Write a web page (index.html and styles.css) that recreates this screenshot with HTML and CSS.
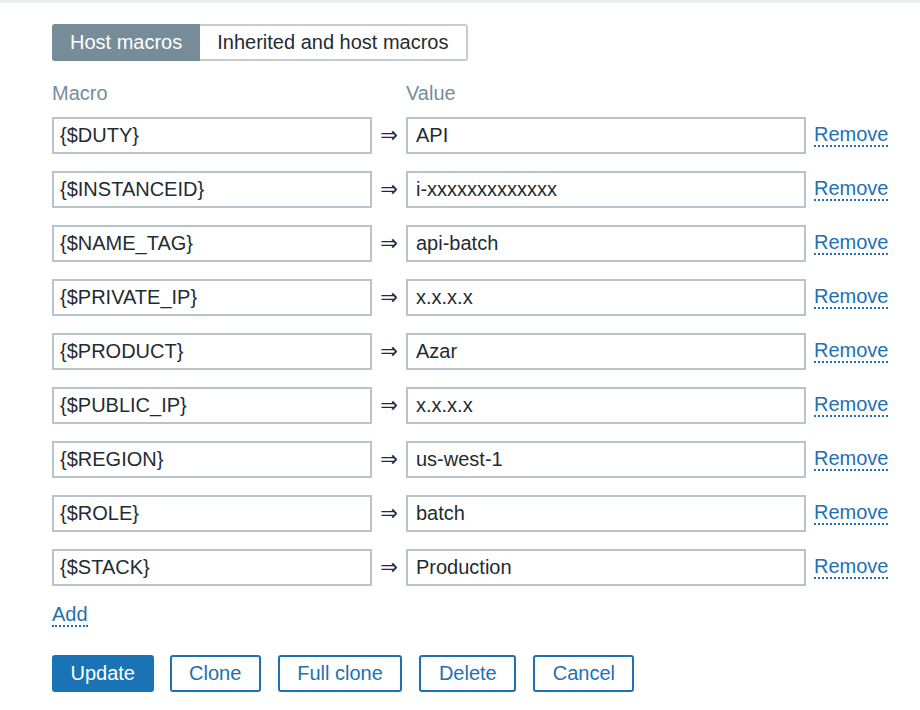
FILE: index.html
```html
<!DOCTYPE html>
<html>
<head>
<meta charset="utf-8">
<link rel="stylesheet" href="styles.css">
</head>
<body>
<div class="page">
  <div class="tabs">
    <div class="tab tab-active">Host macros</div>
    <div class="tab">Inherited and host macros</div>
  </div>
  <div class="head">
    <div class="head-macro">Macro</div>
    <div class="head-value">Value</div>
  </div>
  <div class="rows">
    <div class="row"><div class="field macro">{$DUTY}</div><div class="arrow">⇒</div><div class="field value">API</div><a class="link remove">Remove</a></div>
    <div class="row"><div class="field macro">{$INSTANCEID}</div><div class="arrow">⇒</div><div class="field value">i-xxxxxxxxxxxxx</div><a class="link remove">Remove</a></div>
    <div class="row"><div class="field macro">{$NAME_TAG}</div><div class="arrow">⇒</div><div class="field value">api-batch</div><a class="link remove">Remove</a></div>
    <div class="row"><div class="field macro">{$PRIVATE_IP}</div><div class="arrow">⇒</div><div class="field value">x.x.x.x</div><a class="link remove">Remove</a></div>
    <div class="row"><div class="field macro">{$PRODUCT}</div><div class="arrow">⇒</div><div class="field value">Azar</div><a class="link remove">Remove</a></div>
    <div class="row"><div class="field macro">{$PUBLIC_IP}</div><div class="arrow">⇒</div><div class="field value">x.x.x.x</div><a class="link remove">Remove</a></div>
    <div class="row"><div class="field macro">{$REGION}</div><div class="arrow">⇒</div><div class="field value">us-west-1</div><a class="link remove">Remove</a></div>
    <div class="row"><div class="field macro">{$ROLE}</div><div class="arrow">⇒</div><div class="field value">batch</div><a class="link remove">Remove</a></div>
    <div class="row"><div class="field macro">{$STACK}</div><div class="arrow">⇒</div><div class="field value">Production</div><a class="link remove">Remove</a></div>
  </div>
  <div class="add-line"><a class="link">Add</a></div>
  <div class="buttons">
    <div class="btn btn-primary">Update</div>
    <div class="btn">Clone</div>
    <div class="btn">Full clone</div>
    <div class="btn">Delete</div>
    <div class="btn">Cancel</div>
  </div>
</div>
</body>
</html>
```

FILE: styles.css
```css
html, body {
  margin: 0;
  padding: 0;
  background: #ffffff;
}
body {
  font-family: "Liberation Sans", Arial, Helvetica, sans-serif;
  font-size: 20px;
  color: #1f2c33;
  border-top: 3px solid #ebeef0;
}
.page {
  padding: 21px 0 0 52px;
}
.tabs {
  display: flex;
}
.tab {
  height: 37px;
  box-sizing: border-box;
  padding: 0 17px;
  display: flex;
  align-items: center;
  border: 2px solid #c3ced3;
  border-left: none;
  border-radius: 0 3px 3px 0;
  line-height: 23px;
  white-space: nowrap;
}
.tab-active {
  background: #768d99;
  border: 2px solid #768d99;
  border-right: none;
  color: #ffffff;
  border-radius: 3px 0 0 3px;
  padding: 0 18px 0 16px;
}
.head {
  display: flex;
  margin-top: 21px;
  line-height: 23px;
  color: #768d99;
}
.head-macro {
  width: 354px;
}
.rows {
  margin-top: 12px;
  display: flex;
  flex-direction: column;
  gap: 17px;
}
.row {
  display: flex;
  align-items: center;
}
.field {
  height: 37px;
  box-sizing: border-box;
  border: 2px solid #b7c4ca;
  display: flex;
  align-items: center;
  line-height: 23px;
  white-space: nowrap;
}
.macro {
  width: 320px;
  padding-left: 6px;
}
.value {
  width: 400px;
  padding-left: 8px;
}
.arrow {
  width: 34px;
  text-align: center;
  font-family: "DejaVu Sans", sans-serif;
  font-size: 21px;
  line-height: 23px;
}
.link {
  color: #1f70b2;
  text-decoration: none;
  border-bottom: 2px dotted #1f70b2;
  line-height: 21px;
}
.remove {
  margin-left: 8px;
}
.add-line {
  margin-top: 17px;
  line-height: 23px;
}
.buttons {
  display: flex;
  gap: 17px;
  margin-top: 29px;
}
.btn {
  height: 37px;
  box-sizing: border-box;
  border: 2px solid #1f70b2;
  border-radius: 3px;
  color: #1f70b2;
  padding: 0 17.5px;
  display: flex;
  align-items: center;
  line-height: 23px;
}
.btn-primary {
  background: #1a73b5;
  border-color: #1a73b5;
  color: #ffffff;
  padding: 0 16.5px;
  margin-right: -1px;
}
```
